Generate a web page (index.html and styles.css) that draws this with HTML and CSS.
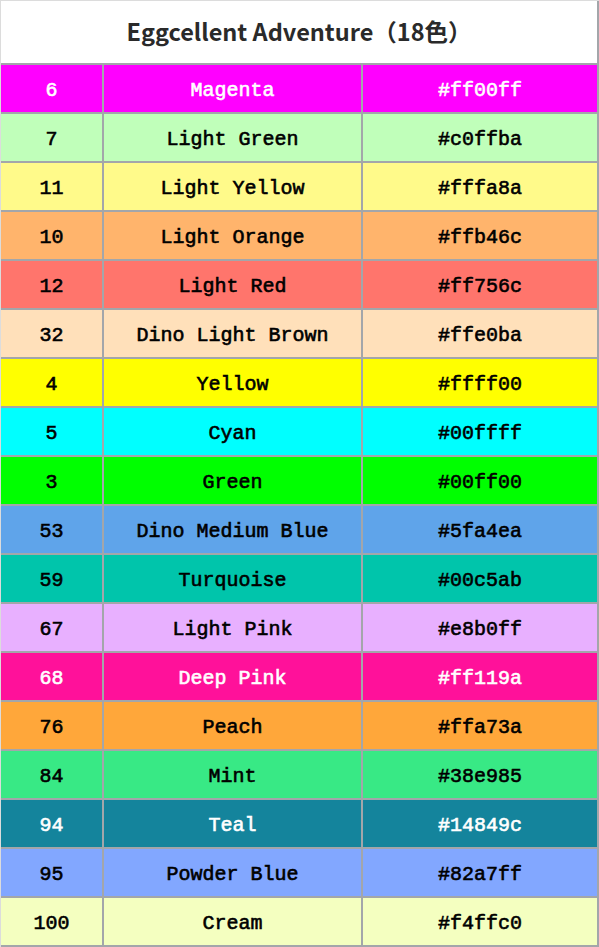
FILE: index.html
```html
<!DOCTYPE html>
<html>
<head>
<meta charset="utf-8">
<link rel="stylesheet" href="styles.css">
</head>
<body>
<div class="wrap">
  <h1 class="title">Eggcellent Adventure（18色）</h1>
  <table class="pal">
    <tr class="light" style="background:#ff00ff"><td>6</td><td>Magenta</td><td>#ff00ff</td></tr>
    <tr style="background:#c0ffba"><td>7</td><td>Light Green</td><td>#c0ffba</td></tr>
    <tr style="background:#fffa8a"><td>11</td><td>Light Yellow</td><td>#fffa8a</td></tr>
    <tr style="background:#ffb46c"><td>10</td><td>Light Orange</td><td>#ffb46c</td></tr>
    <tr style="background:#ff756c"><td>12</td><td>Light Red</td><td>#ff756c</td></tr>
    <tr style="background:#ffe0ba"><td>32</td><td>Dino Light Brown</td><td>#ffe0ba</td></tr>
    <tr style="background:#ffff00"><td>4</td><td>Yellow</td><td>#ffff00</td></tr>
    <tr style="background:#00ffff"><td>5</td><td>Cyan</td><td>#00ffff</td></tr>
    <tr style="background:#00ff00"><td>3</td><td>Green</td><td>#00ff00</td></tr>
    <tr style="background:#5fa4ea"><td>53</td><td>Dino Medium Blue</td><td>#5fa4ea</td></tr>
    <tr style="background:#00c5ab"><td>59</td><td>Turquoise</td><td>#00c5ab</td></tr>
    <tr style="background:#e8b0ff"><td>67</td><td>Light Pink</td><td>#e8b0ff</td></tr>
    <tr class="light" style="background:#ff119a"><td>68</td><td>Deep Pink</td><td>#ff119a</td></tr>
    <tr style="background:#ffa73a"><td>76</td><td>Peach</td><td>#ffa73a</td></tr>
    <tr style="background:#38e985"><td>84</td><td>Mint</td><td>#38e985</td></tr>
    <tr class="light" style="background:#14849c"><td>94</td><td>Teal</td><td>#14849c</td></tr>
    <tr style="background:#82a7ff"><td>95</td><td>Powder Blue</td><td>#82a7ff</td></tr>
    <tr style="background:#f4ffc0"><td>100</td><td>Cream</td><td>#f4ffc0</td></tr>
  </table>
</div>
</body>
</html>
```
FILE: styles.css
```css
html, body {
  margin: 0;
  padding: 0;
  background: #ffffff;
}
.wrap {
  width: 598px;
  border-left: 1px solid #dcdcdc;
  border-top: 1px solid #dcdcdc;
}
.title {
  margin: 0;
  height: 62px;
  padding-bottom: 2px;
  box-sizing: border-box;
  display: flex;
  align-items: center;
  justify-content: center;
  font-family: "Noto Sans CJK JP", "Noto Sans", sans-serif;
  font-weight: 700;
  font-size: 23.5px;
  color: #2a2a2a;
  border-right: 2px solid #a3a6aa;
}
.pal {
  border-collapse: collapse;
  width: 598px;
  table-layout: fixed;
  font-family: "Liberation Mono", "Courier New", monospace;
  font-weight: 400;
  -webkit-text-stroke: 0.6px currentColor;
  font-size: 20px;
  color: #000;
}
.pal td {
  height: 44px;
  padding: 3px 0 0 0;
  text-align: center;
  vertical-align: middle;
  border: 2px solid #a3a6aa;
}
.pal td:first-child {
  border-left: none;
  width: 101px;
}
.pal td:nth-child(2) {
  width: 257px;
}
.pal tr.light td {
  color: #ffffff;
}
```
